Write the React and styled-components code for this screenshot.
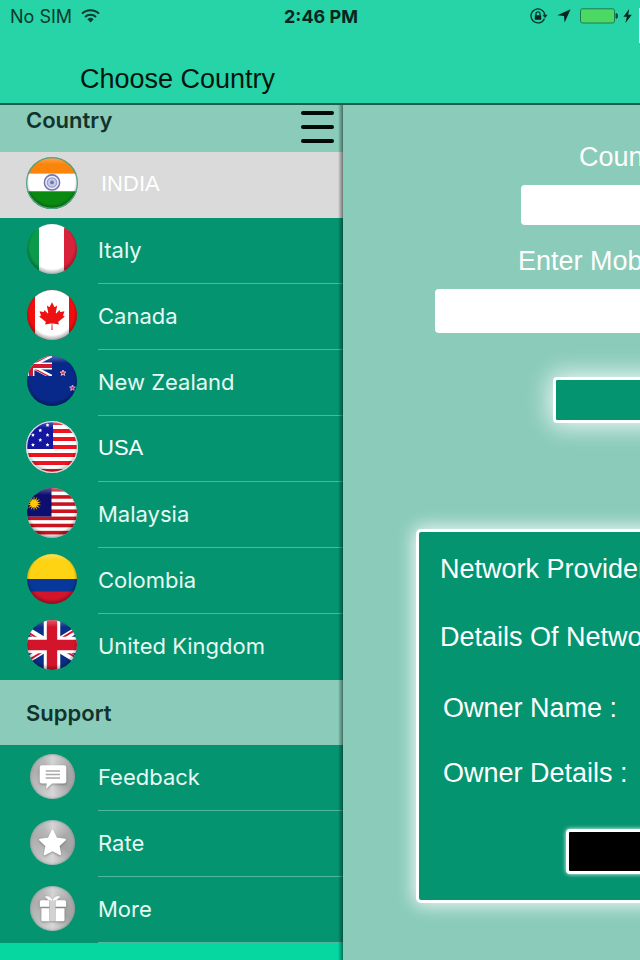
import React from "react";
import styled, { createGlobalStyle } from "styled-components";

const theme = {
  mint: "#26d4a7",
  bright: "#06d6a0",
  pale: "#8acbba",
  green: "#059470",
  selected: "#dadada",
  line: "#4fb79b",
  sans: `"Liberation Sans", Arial, sans-serif`,
  ui: `Inter, "Liberation Sans", sans-serif`,
};

const GlobalStyle = createGlobalStyle`
  * {
    box-sizing: border-box;
  }

  body {
    margin: 0;
    background-color: ${theme.pale};
    font-family: ${theme.sans};
  }

  button {
    font: inherit;
    cursor: pointer;
  }
`;

const Screen = styled.div`
  display: flex;
  flex-direction: column;
  min-height: 100vh;
  overflow: hidden;
`;

const TopBar = styled.header`
  position: relative;
  background-color: ${theme.mint};
  border-bottom: 2px solid #1a5d4e;

  &::after {
    content: "";
    position: absolute;
    top: 8px;
    right: 0;
    width: 1px;
    height: 35px;
    background-color: #fff;
  }
`;

const StatusBar = styled.div`
  display: grid;
  grid-template-columns: 1fr auto 1fr;
  align-items: center;
  height: 32px;
  padding: 0 8px 0 10px;
  font-family: ${theme.ui};
  font-size: 18px;
  color: #0b3a2e;
`;

const Carrier = styled.div`
  display: flex;
  align-items: center;
  gap: 9px;
`;

const Clock = styled.div`
  font-size: 18px;
  font-weight: 700;
  color: #06261e;
`;

const StatusIcons = styled.div`
  display: flex;
  align-items: center;
  justify-content: flex-end;
  gap: 9px;
`;

const Power = styled.div`
  display: flex;
  align-items: center;
  gap: 5px;
`;

const PageTitle = styled.h1`
  margin: 0;
  padding: 31px 20px 8px 80px;
  font-size: 27px;
  font-weight: 400;
  line-height: 32px;
  color: #03150f;
`;

const Body = styled.div`
  display: flex;
  flex: 1;
`;

const Sidebar = styled.nav`
  position: relative;
  flex: 0 0 343px;
  background-color: ${theme.bright};

  &::after {
    content: "";
    position: absolute;
    top: 0;
    right: 0;
    bottom: 0;
    width: 5px;
    background: linear-gradient(to right, transparent, rgba(0, 20, 15, 0.5));
    pointer-events: none;
  }
`;

const SectionHeader = styled.div`
  display: flex;
  align-items: center;
  justify-content: space-between;
  height: ${(props) => (props.$short ? "47px" : "65px")};
  padding: 0 9px 0 26px;
  background-color: ${theme.pale};
`;

const SectionTitle = styled.h2`
  margin: 0;
  padding-bottom: ${(props) => (props.$raised ? "18px" : "0")};
  font-family: ${theme.ui};
  font-size: 22px;
  font-weight: 600;
  line-height: 28px;
  color: #12332b;
`;

const MenuButton = styled.button`
  display: flex;
  flex-direction: column;
  justify-content: space-between;
  width: 33px;
  height: 36px;
  padding: 0 0 4px;
  border: none;
  background: none;
`;

const MenuBar = styled.span`
  width: 100%;
  height: 4px;
  border-radius: 2px;
  background-color: #020a08;
`;

const List = styled.ul`
  margin: 0;
  padding: 0;
  list-style: none;
`;

const RowButton = styled.button`
  display: flex;
  align-items: center;
  gap: 20px;
  width: 100%;
  height: 66px;
  padding: 0 0 0 26px;
  border: none;
  background-color: ${(props) =>
    props.$selected ? theme.selected : theme.green};
  text-align: left;
`;

const IconSlot = styled.span`
  display: flex;
  justify-content: center;
  width: 52px;
  padding-bottom: 4px;
`;

const RowLabel = styled.span`
  display: flex;
  flex: 1;
  align-items: center;
  align-self: stretch;
  padding: 0 0 1px ${(props) => (props.$selected ? "3px" : "0")};
  border-bottom: 1px solid
    ${(props) => (props.$last ? "transparent" : theme.line)};
  font-family: ${(props) => (props.$plain ? theme.sans : theme.ui)};
  font-size: 22px;
  color: ${(props) => (props.$plain ? "#fff" : "#e6f9f3")};
`;

const Content = styled.main`
  display: flex;
  flex: 1;
  flex-direction: column;
  min-width: 0;
  padding: 36px 0 58px 73px;
  overflow: hidden;
  background-color: ${theme.pale};
`;

const FieldLabel = styled.label`
  margin-left: ${(props) => props.$indent};
  font-size: 27px;
  line-height: 32px;
  color: #fff;
  white-space: nowrap;
`;

const TextField = styled.input`
  height: ${(props) => props.$height};
  margin: 12px -40px 20px ${(props) => props.$indent};
  padding: 0 12px;
  border: none;
  border-radius: 4px;
  background-color: #fff;
  font-size: 24px;
`;

const SubmitButton = styled.button`
  height: 46px;
  margin: 24px -60px 0 137px;
  border: 3px solid #fff;
  border-radius: 4px;
  background-color: ${theme.green};
  box-shadow: 0 0 24px 3px rgba(255, 255, 255, 0.9);
`;

const Card = styled.section`
  display: flex;
  flex-direction: column;
  margin: 106px -60px 0 0;
  padding: 21px 0 26px;
  border: 3px solid #fff;
  border-radius: 5px;
  background-color: ${theme.green};
  box-shadow: 0 0 18px 2px rgba(255, 255, 255, 0.9);
`;

const DetailGroup = styled.div`
  display: flex;
  flex-direction: column;
  gap: ${(props) => props.$gap};
  padding-left: ${(props) => props.$indent};
  font-size: 27px;
  line-height: 32px;
  color: #fff;
  white-space: nowrap;

  & + & {
    margin-top: 39px;
  }
`;

const CardButton = styled.button`
  height: 45px;
  margin: 40px 0 0 147px;
  border: 3px solid #fff;
  border-radius: 4px;
  background-color: #000;
  box-shadow: 0 0 4px #fff;
`;

const starPoints = (cx, cy, outer, inner, count) =>
  Array.from({ length: count * 2 }, (_, i) => {
    const r = i % 2 ? inner : outer;
    const a = (Math.PI * i) / count - Math.PI / 2;
    return `${cx + r * Math.cos(a)},${cy + r * Math.sin(a)}`;
  }).join(" ");

const Stripes = ({ count, color }) => (
  <>
    <rect width="50" height="50" fill="#fff" />
    {Array.from({ length: Math.ceil(count / 2) }, (_, i) => (
      <rect
        key={i}
        y={(i * 100) / count}
        width="50"
        height={50 / count}
        fill={color}
      />
    ))}
  </>
);

const Flag = ({ id, size = 50, ring, children }) => (
  <svg width={size} height={size} viewBox="0 0 50 50" aria-hidden="true">
    <defs>
      <clipPath id={`${id}-clip`}>
        <circle cx="25" cy="25" r="25" />
      </clipPath>
      <radialGradient id={`${id}-shade`} cx="0.5" cy="0.46" r="0.55">
        <stop offset="0.8" stopColor="#000" stopOpacity="0" />
        <stop offset="1" stopColor="#000" stopOpacity="0.38" />
      </radialGradient>
      <linearGradient id={`${id}-gloss`} x1="0" y1="0" x2="0" y2="1">
        <stop offset="0" stopColor="#fff" stopOpacity="0.3" />
        <stop offset="0.14" stopColor="#fff" stopOpacity="0" />
      </linearGradient>
    </defs>
    <g clipPath={`url(#${id}-clip)`}>
      {children}
      <rect width="50" height="50" fill={`url(#${id}-shade)`} />
      <rect width="50" height="50" fill={`url(#${id}-gloss)`} />
    </g>
    {ring && (
      <circle cx="25" cy="25" r="24.4" fill="none" stroke={ring} strokeWidth="1.2" />
    )}
  </svg>
);

const India = () => (
  <Flag id="in" size={52} ring="#4fa58a">
    <rect width="50" height="17" fill="#fb850b" />
    <rect y="16" width="50" height="17" fill="#fff" />
    <rect y="33" width="50" height="17" fill="#0b8a12" />
    <circle cx="25" cy="24.5" r="7.3" fill="#eef0fa" stroke="#7478b0" strokeWidth="1.5" />
    <circle cx="25" cy="24.5" r="4.6" fill="#c3c8e4" stroke="#9398c6" strokeWidth="1" />
    <circle cx="25" cy="24.5" r="1.8" fill="#6f76b3" />
  </Flag>
);

const Italy = () => (
  <Flag id="it">
    <rect width="12" height="50" fill="#0b9a4c" />
    <rect x="12" width="26" height="50" fill="#fff" />
    <rect x="37" width="13" height="50" fill="#d8213a" />
  </Flag>
);

const Canada = () => (
  <Flag id="ca">
    <rect width="50" height="50" fill="#f20d0d" />
    <rect x="8" width="34" height="50" fill="#fff" />
    <path
      transform="translate(25 26) scale(0.0069)"
      fill="#ee1111"
      d="m-90 2030 45-863a95 95 0 0 0-111-98l-859 151 116-320a65 65 0 0 0-20-73l-941-762 212-99a65 65 0 0 0 34-79l-186-572 542 115a65 65 0 0 0 73-38l105-247 423 454a65 65 0 0 0 111-57l-204-1052 327 189a65 65 0 0 0 91-27l332-652 332 652a65 65 0 0 0 91 27l327-189-204 1052a65 65 0 0 0 111 57l423-454 105 247a65 65 0 0 0 73 38l542-115-186 572a65 65 0 0 0 34 79l212 99-941 762a65 65 0 0 0-20 73l116 320-859-151a95 95 0 0 0-111 98l45 863z"
    />
  </Flag>
);

const NewZealand = () => (
  <Flag id="nz">
    <rect width="50" height="50" fill="#08298a" />
    <svg width="25" height="20" viewBox="0 0 25 20">
      <path d="M-17 -1 25 21M-17 21 25 -1" stroke="#fff" strokeWidth="4" />
      <path d="M4 11 25 22M4 9 25 -2" stroke="#d5172f" strokeWidth="1.3" />
      <path d="M4 0v20M0 10h25" stroke="#fff" strokeWidth="6.8" />
      <path d="M4 0v20M0 10h25" stroke="#d5172f" strokeWidth="4" />
    </svg>
    <polygon points={starPoints(36, 17, 3, 1.3, 5)} fill="#d5304f" stroke="#e9c5d8" strokeWidth="0.9" />
    <polygon points={starPoints(45.5, 32, 3, 1.3, 5)} fill="#d5304f" stroke="#e9c5d8" strokeWidth="0.9" />
  </Flag>
);

const usaStars = [
  [20.7, 4],
  [13.7, 9],
  [6.7, 13.5],
  [20.7, 13.5],
  [13.7, 18.3],
  [6.7, 23],
  [20.7, 23],
];

const Usa = () => (
  <Flag id="us" size={52} ring="#d3e2e4">
    <Stripes count={13} color="#ea1520" />
    <rect width="26" height="26.9" fill="#1216a0" />
    {usaStars.map(([x, y]) => (
      <polygon key={`${x}-${y}`} points={starPoints(x, y, 1.9, 1, 5)} fill="#fff" />
    ))}
  </Flag>
);

const Malaysia = () => (
  <Flag id="my">
    <Stripes count={14} color="#c9141f" />
    <rect width="24.5" height="28.6" fill="#0d0f6e" />
    <polygon points={starPoints(7, 15.5, 7.6, 3.4, 14)} fill="#fdc80a" />
  </Flag>
);

const Colombia = () => (
  <Flag id="co">
    <rect width="50" height="25" fill="#fdd313" />
    <rect y="25" width="50" height="13" fill="#07389a" />
    <rect y="37.5" width="50" height="13" fill="#d3152c" />
  </Flag>
);

const UnitedKingdom = () => (
  <Flag id="gb">
    <rect width="50" height="50" fill="#0b2f86" />
    <path d="M-8 5 58 45M58 5-8 45" stroke="#fff" strokeWidth="6.4" />
    <path d="M-8 7 25 27M58 4 25 24M25 23 58 43M25 26-8 46" stroke="#d3152c" strokeWidth="2" />
    <path d="M25 0v50M0 25h50" stroke="#fff" strokeWidth="16.5" />
    <path d="M25 0v50M0 25h50" stroke="#d3152c" strokeWidth="10.4" />
  </Flag>
);

const Disc = styled.span`
  display: flex;
  width: 45px;
  height: 45px;
  border-radius: 50%;
  background: conic-gradient(
    #d4d4d4,
    #a9a9a9 60deg,
    #a4a4a4 120deg,
    #d6d6d6 180deg,
    #bdbdbd 230deg,
    #adadad 290deg,
    #b8b8b8 330deg,
    #d4d4d4
  );
  box-shadow: inset 0 0 3px #6f8f86;

  svg {
    filter: drop-shadow(0 1px 1px rgba(0, 0, 0, 0.3));
  }
`;

const Feedback = () => (
  <Disc>
    <svg width="45" height="45" viewBox="0 0 45 45" aria-hidden="true">
      <path
        fill="#fff"
        d="M12 11.3h22a2.3 2.3 0 0 1 2.3 2.3v13.6a2.3 2.3 0 0 1-2.3 2.3H22l-6 5.5 .8-5.5H12a2.3 2.3 0 0 1-2.3-2.3V13.6a2.3 2.3 0 0 1 2.3-2.3z"
      />
      <path d="M15.7 17h14.3M15.7 20.5h14.3M15.7 24h14.3" stroke="#a9a9a9" strokeWidth="1.3" />
    </svg>
  </Disc>
);

const Rate = () => (
  <Disc>
    <svg width="45" height="45" viewBox="0 0 45 45" aria-hidden="true">
      <polygon
        points={starPoints(22.5, 23.7, 13, 6.4, 5)}
        fill="#fff"
        stroke="#fff"
        strokeWidth="2"
        strokeLinejoin="round"
      />
    </svg>
  </Disc>
);

const More = () => (
  <Disc>
    <svg width="45" height="45" viewBox="0 0 45 45" aria-hidden="true">
      <rect x="19.5" y="14" width="6" height="21" fill="#d2d2d2" />
      <path
        fill="#fff"
        d="M11.5 14.3H19.3V20.8H9.8V16a1.7 1.7 0 0 1 1.7-1.7zM25.6 14.3h8.8a1.7 1.7 0 0 1 1.7 1.7v4.8H25.6zM11.4 22.3h7.9v13h-6.4a1.5 1.5 0 0 1-1.5-1.5zM25.6 22.3h8.9v11.5a1.5 1.5 0 0 1-1.5 1.5h-7.4z"
      />
      <path
        d="M22 14c-1.4-2.6-3.8-3.8-6.4-3.2 1 2 3.2 3.2 6.4 3.2zM23 14c1.4-2.6 3.8-3.8 6.4-3.2-1 2-3.2 3.2-6.4 3.2z"
        fill="#fff"
        stroke="#fff"
        strokeWidth="1"
        strokeLinejoin="round"
      />
    </svg>
  </Disc>
);

const countries = [
  { name: "INDIA", Icon: India, plain: true, selected: true },
  { name: "Italy", Icon: Italy },
  { name: "Canada", Icon: Canada },
  { name: "New Zealand", Icon: NewZealand },
  { name: "USA", Icon: Usa, plain: true },
  { name: "Malaysia", Icon: Malaysia },
  { name: "Colombia", Icon: Colombia },
  { name: "United Kingdom", Icon: UnitedKingdom, last: true },
];

const support = [
  { name: "Feedback", Icon: Feedback },
  { name: "Rate", Icon: Rate },
  { name: "More", Icon: More },
];

const Row = ({ name, Icon, plain, selected, last }) => (
  <li>
    <RowButton type="button" $selected={selected}>
      <IconSlot>
        <Icon />
      </IconSlot>
      <RowLabel $plain={plain} $selected={selected} $last={last || selected}>
        {name}
      </RowLabel>
    </RowButton>
  </li>
);

const Wifi = () => (
  <svg width="19" height="14" viewBox="0 0 19 14" fill="none" stroke="#0b3a2e" strokeWidth="2" aria-hidden="true">
    <path d="M1 4.6a12.2 12.2 0 0 1 17 0M4 7.9a8 8 0 0 1 11 0" />
    <path d="M6.4 10.2a4.6 4.6 0 0 1 6.2 0L9.5 13.4z" fill="#0b3a2e" stroke="none" />
  </svg>
);

const RotationLock = () => (
  <svg width="18" height="16" viewBox="0 0 18 16" fill="none" stroke="#06382b" aria-hidden="true">
    <path d="M14.4 10.7A7 7 0 1 1 14.9 7" strokeWidth="1.3" />
    <path d="M12.4 6.8h5.2l-2.6 3.4z" fill="#06382b" stroke="none" />
    <path d="M6 7.5V5.8a2 2 0 0 1 4 0v1.7" strokeWidth="1.3" />
    <rect x="4.8" y="7.2" width="6.4" height="4.6" rx="0.6" fill="#06261e" stroke="none" />
  </svg>
);

const LocationArrow = () => (
  <svg width="14" height="14" viewBox="0 0 14 14" fill="#06261e" aria-hidden="true">
    <path d="M13.6 0.3 7.6 13.4 7 7 0.4 6.2z" />
  </svg>
);

const Battery = () => (
  <svg width="38" height="16" viewBox="0 0 38 16" aria-hidden="true">
    <rect x="0.5" y="0.8" width="34" height="14.2" rx="2" fill="#4bd964" stroke="#1b7c55" />
    <path d="M36 5.4a2.6 2.6 0 0 1 0 5z" fill="#0f4c3a" stroke="#0f4c3a" />
  </svg>
);

const Bolt = () => (
  <svg width="9" height="14" viewBox="0 0 9 14" fill="#06261e" aria-hidden="true">
    <path d="M6.2 0 0.4 7.8h3.4L2.4 14 8.8 5.8H5.2z" />
  </svg>
);

const App = () => (
  <>
    <GlobalStyle />
    <Screen>
      <TopBar>
        <StatusBar>
          <Carrier>
            No SIM
            <Wifi />
          </Carrier>
          <Clock>2:46 PM</Clock>
          <StatusIcons>
            <RotationLock />
            <LocationArrow />
            <Power>
              <Battery />
              <Bolt />
            </Power>
          </StatusIcons>
        </StatusBar>
        <PageTitle>Choose Country</PageTitle>
      </TopBar>
      <Body>
        <Sidebar>
          <SectionHeader $short>
            <SectionTitle $raised>Country</SectionTitle>
            <MenuButton type="button" aria-label="Menu">
              <MenuBar />
              <MenuBar />
              <MenuBar />
            </MenuButton>
          </SectionHeader>
          <List>
            {countries.map((item) => (
              <Row key={item.name} {...item} />
            ))}
          </List>
          <SectionHeader>
            <SectionTitle>Support</SectionTitle>
          </SectionHeader>
          <List>
            {support.map((item) => (
              <Row key={item.name} {...item} />
            ))}
          </List>
        </Sidebar>
        <Content>
          <FieldLabel htmlFor="country" $indent="163px">
            Country
          </FieldLabel>
          <TextField id="country" type="text" $height="40px" $indent="105px" />
          <FieldLabel htmlFor="mobile" $indent="102px">
            Enter Mobile
          </FieldLabel>
          <TextField id="mobile" type="tel" $height="44px" $indent="19px" />
          <SubmitButton type="button" aria-label="Submit" />
          <Card>
            <DetailGroup $gap="36px" $indent="21px">
              <div>Network Provider</div>
              <div>Details Of Network</div>
            </DetailGroup>
            <DetailGroup $gap="33px" $indent="24px">
              <div>Owner Name :</div>
              <div>Owner Details :</div>
            </DetailGroup>
            <CardButton type="button" aria-label="Details" />
          </Card>
        </Content>
      </Body>
    </Screen>
  </>
);

export default App;
